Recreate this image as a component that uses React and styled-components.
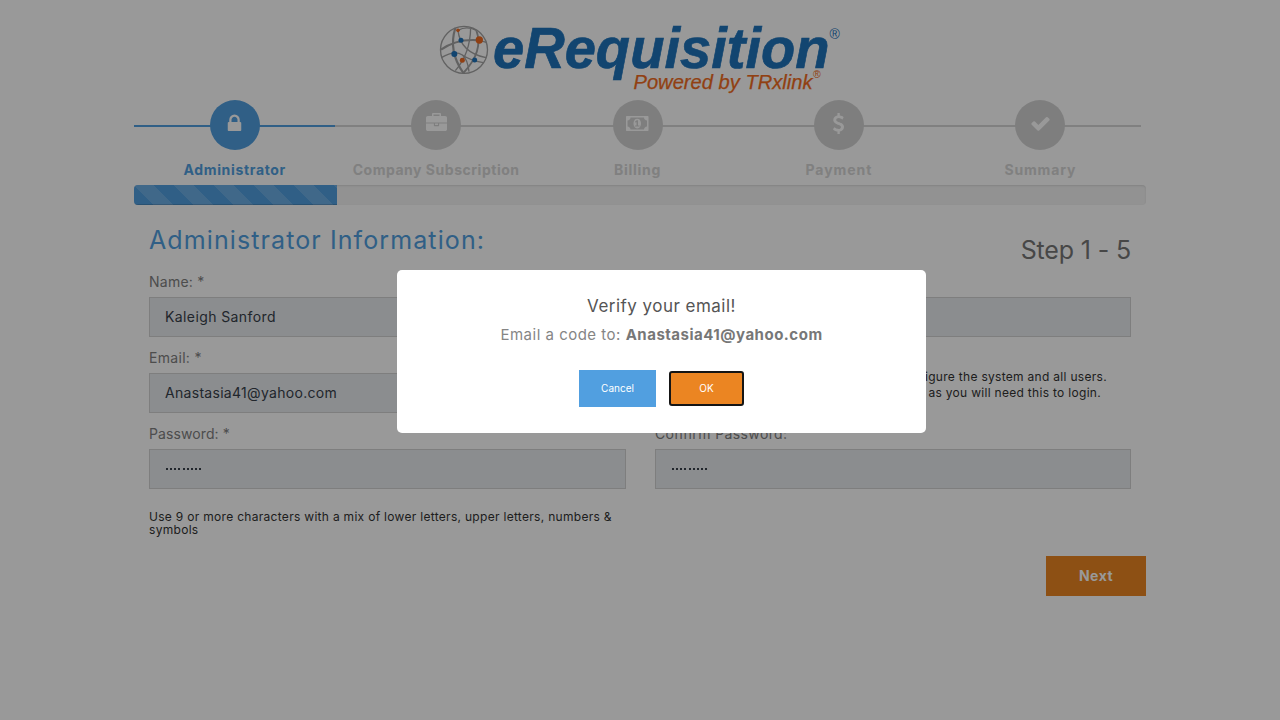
import React from 'react';
import styled, { createGlobalStyle } from 'styled-components';

const GlobalStyle = createGlobalStyle`
  *, *::before, *::after { box-sizing: border-box; }
  body {
    margin: 0;
    background: #fff;
    color: #808080;
    font-family: Inter, "Open Sans", sans-serif;
    font-size: 14px;
    overflow: hidden;
  }
  h1, h2, p { margin: 0; font-weight: 400; }
`;

const Page = styled.main`
  width: 1012px;
  height: 720px;
  margin: 0 auto;
`;

const LogoBar = styled.header`
  display: flex;
  justify-content: center;
  height: 100px;
`;

const Steps = styled.ol`
  display: flex;
  list-style: none;
  width: 1007px;
  height: 85px;
  margin: 0;
  padding: 0;
`;

const StepItem = styled.li`
  flex: 1;
  display: flex;
  flex-direction: column;
  align-items: center;
  color: ${(p) => (p.$active ? '#519fe0' : '#d5d5d5')};
  background: linear-gradient(currentColor, currentColor) 0 25px / 100% 2px no-repeat;
`;

const StepCircle = styled.span`
  display: flex;
  justify-content: center;
  width: 50px;
  height: 50px;
  padding-top: 13px;
  border-radius: 50%;
  background: ${(p) => (p.$active ? '#519fe0' : '#d3d3d3')};
  svg { display: block; height: 21px; fill: #fff; }
`;

const StepLabel = styled.span`
  margin-top: 11px;
  font-weight: 700;
  line-height: 18px;
  white-space: nowrap;
  letter-spacing: ${(p) => p.$track}px;
`;

const Progress = styled.div`
  height: 20px;
  border-radius: 4px;
  overflow: hidden;
  background: #f3f3f3;
  box-shadow: inset 0 1px 2px rgba(0, 0, 0, 0.1);
`;

const ProgressFill = styled.div`
  width: 203px;
  height: 100%;
  background-color: #519fe0;
  background-image: linear-gradient(45deg, rgba(255,255,255,.15) 25%, transparent 25%, transparent 50%, rgba(255,255,255,.15) 50%, rgba(255,255,255,.15) 75%, transparent 75%, transparent);
  background-size: 40px 40px;
  box-shadow: inset 0 -1px 0 rgba(0, 0, 0, 0.15);
`;

const TitleRow = styled.div`
  display: flex;
  justify-content: space-between;
  height: 68px;
  padding: 0 15px;
`;

const Heading = styled.h1`
  margin-top: 20px;
  font-size: 25px;
  line-height: 30px;
  letter-spacing: 1.1px;
  color: #519fe0;
`;

const StepCount = styled.p`
  margin-top: 30px;
  font-size: 25px;
  line-height: 30px;
  letter-spacing: -0.15px;
  color: #777;
`;

const FormGrid = styled.form`
  display: grid;
  grid-template-columns: 477px 476px;
  column-gap: 29px;
  grid-auto-rows: 76px;
  padding: 0 15px;
`;

const Field = styled.div`
  display: flex;
  flex-direction: column;
`;

const Label = styled.label`
  height: 24px;
  line-height: 18px;
  letter-spacing: ${(p) => p.$track ?? 0.1}px;
`;

const Input = styled.input`
  width: 100%;
  height: 40px;
  padding: 0 15px 2px;
  border: 1px solid #d2d2d2;
  border-radius: 0;
  outline: 0;
  background: #e8ebee;
  color: #37404a;
  font: 400 14px Inter, sans-serif;
  letter-spacing: ${(p) => p.$track ?? 0.4}px;
`;

const PasswordBox = styled.div`
  display: flex;
  align-items: center;
  gap: 2px;
  height: 40px;
  padding: 0 15px 0 16px;
  border: 1px solid #d2d2d2;
  background: #e8ebee;
`;

const Dot = styled.i`
  width: 2px;
  height: 2px;
  margin-right: 0.15px;
  background: #37404a;
`;

const Note = styled.div`
  padding-top: 20px;
  text-align: right;
  font-size: 12px;
  line-height: 16px;
  color: #333;
  letter-spacing: 0.3px;
`;

const NoteLine = styled.p`
  padding-right: ${(p) => p.$inset}px;
`;

const Hint = styled.p`
  width: 477px;
  margin: 9px 15px 0;
  font-size: 12px;
  line-height: 13px;
  letter-spacing: 0.3px;
  color: #333;
`;

const Actions = styled.div`
  display: flex;
  justify-content: flex-end;
  margin-top: 20px;
`;

const NextButton = styled.button`
  width: 100px;
  height: 40px;
  padding-bottom: 2px;
  border: 0;
  background: #eb8522;
  color: #fff;
  font: 700 14px Inter, sans-serif;
  letter-spacing: 0.45px;
`;

const Overlay = styled.div`
  position: fixed;
  inset: 0;
  display: flex;
  align-items: flex-start;
  justify-content: center;
  padding: 270px 0 0 43px;
  background: rgba(0, 0, 0, 0.4);
`;

const Dialog = styled.section`
  display: flex;
  flex-direction: column;
  align-items: center;
  width: 529px;
  height: 163.4px;
  padding-top: 24px;
  border-radius: 5px;
  background: #fff;
`;

const DialogTitle = styled.h2`
  font-size: 17px;
  line-height: 24px;
  letter-spacing: 0.47px;
  color: #555;
`;

const DialogText = styled.p`
  margin-top: 5px;
  font-size: 15px;
  line-height: 24px;
  letter-spacing: 0.5px;
  color: #858585;
  strong { color: #777; letter-spacing: 0.5px; }
`;

const DialogButtons = styled.div`
  display: flex;
  gap: 13px;
  margin-top: 23px;
`;

const DialogButton = styled.button`
  width: 77px;
  height: 37px;
  padding: 0 0 2px;
  border: 0;
  background: ${(p) => (p.$primary ? '#eb8522' : '#519fe0')};
  color: #fff;
  font: 400 10px Inter, sans-serif;
`;

const ConfirmButton = styled(DialogButton)`
  width: 75px;
  height: 35px;
  margin-top: 1px;
  border: 2px solid #151515;
  border-radius: 3px;
`;

const Mark = ({ box = '0 0 1792 1792', d }) => (
  <svg viewBox={box} aria-hidden="true"><path d={d} /></svg>
);

const steps = [
  { label: 'Administrator', track: 0.66, active: true, d: 'M640 768h512v-192q0-106-75-181t-181-75-181 75-75 181v192zm832 96v576q0 40-28 68t-68 28h-960q-40 0-68-28t-28-68v-576q0-40 28-68t68-28h32v-192q0-184 132-316t316-132 316 132 132 316v192h32q40 0 68 28t28 68z' },
  { label: 'Company Subscription', track: 0.52, d: 'M640 256h512v-128h-512v128zm1152 640v480q0 66-47 113t-113 47h-1472q-66 0-113-47t-47-113v-480h672v160q0 26 19 45t45 19h320q26 0 45-19t19-45v-160h672zm-768 0v128h-256v-128h256zm768-480v384h-1792v-384q0-66 47-113t113-47h352v-160q0-40 28-68t68-28h576q40 0 68 28t28 68v160h352q66 0 113 47t47 113z' },
  { label: 'Billing', track: 0.7, box: '0 -256 1920 1792', d: 'M768 896h384v-96h-128v-448h-114l-148 137 77 80q42-37 55-57h2v288h-128v96zm512-256q0 70-21 142t-59.500 134-101.500 101-138 39-138-39-101.500-101-59.500-134-21-142 21-142 59.500-134 101.500-101 138-39 138 39 101.500 101 59.500 134 21 142zm512 256v-512q-106 0-181-75t-75-181h-1152q0 106-75 181t-181 75v512q106 0 181 75t75 181h1152q0-106 75-181t181-75zm128-832v1152q0 26-19 45t-45 19h-1792q-26 0-45-19t-19-45v-1152q0-26 19-45t45-19h1792q26 0 45 19t19 45z' },
  { label: 'Payment', track: 0.95, d: 'M1362 1185q0 153-99.500 263.500t-258.500 136.500v175q0 14-9 23t-23 9h-135q-13 0-22.500-9.500t-9.500-22.500v-175q-66-9-127.500-31t-101.500-44.500-74-48-46.500-37.500-17.500-18q-17-21-2-41l103-135q7-10 23-12 15-2 24 9l2 2q113 99 243 125 37 8 74 8 81 0 142.500-43t61.500-122q0-28-15-53t-33.500-42-58.500-37.500-66-32-80-32.500q-39-16-61.500-25t-61.500-26.500-62.500-31-56.500-35.500-53.500-42.500-43.500-49-35.500-58-21-66.500-8.500-78q0-138 98-242t255-134v-180q0-13 9.500-22.500t22.500-9.500h135q14 0 23 9t9 23v176q57 6 110.500 23t87 33.500 63.500 37.500 39 29 15 14q17 18 5 38l-81 146q-8 15-23 16-14 3-27-7-3-3-14.500-12t-39-26.500-58.500-32-74.500-26-85.500-11.500q-95 0-155 43t-60 111q0 26 8.500 48t29.500 41.500 39.500 33 56 31 60.500 27 70 27.500q53 20 81 31.500t76 35 75.500 42.500 62 50 53 63.500 31.500 76.500 13 94z' },
  { label: 'Summary', track: 0.85, d: 'M1671 566q0 40-28 68l-724 724-136 136q-28 28-68 28t-68-28l-136-136-362-362q-28-28-28-68t28-68l136-136q28-28 68-28t68 28l294 295 656-657q28-28 68-28t68 28l136 136q28 28 28 68z' },
];

const Logo = () => (
  <svg width="404" height="100" viewBox="438 0 404 100" role="img" aria-label="eRequisition, Powered by TRxlink">
    <g transform="translate(430 15) scale(.33333)" fill="none" stroke="#a3a3a3">
      <circle cx="102" cy="104.500" r="70.500" strokeWidth="4" />
      <path d="M76 39Q54 108 100 174M33 104Q82 70 148 76" strokeWidth="6.500" />
      <path d="M139 46Q162 108 100 174" strokeWidth="5.500" />
      <path d="M148 76L169 82M84 46Q91 112 168 128M122 37Q121 116 76 167M34 128Q74 104 97 120T160 143M97 120Q113 133 117 170M84 46Q110 31 139 46" strokeWidth="4" />
      <g fill="#1e73bb" stroke="none">
        <circle cx="93" cy="76" r="7.500" /><circle cx="73" cy="117" r="9" /><circle cx="134" cy="135" r="7.500" />
      </g>
      <g fill="#f26b21" stroke="none">
        <circle cx="84" cy="46" r="5.500" /><circle cx="148" cy="75" r="11" /><circle cx="97" cy="136" r="7.500" />
      </g>
    </g>
    <g fill="#1e73bb" fontFamily="Liberation Sans, Arial, sans-serif">
      <text x="493" y="68" fontSize="58" fontWeight="700" fontStyle="italic" textLength="336.500" lengthAdjust="spacingAndGlyphs" stroke="#1e73bb" strokeWidth=".7">eRequisition</text>
      <text x="829.500" y="39" fontSize="14">®</text>
    </g>
    <g fill="#f26b21" fontFamily="Liberation Sans, Arial, sans-serif">
      <text x="633.500" y="89" fontSize="20" fontStyle="italic" textLength="179" lengthAdjust="spacingAndGlyphs" stroke="#f26b21" strokeWidth=".25">Powered by TRxlink</text>
      <text x="813" y="78" fontSize="10.500">®</text>
    </g>
  </svg>
);

const Password = () => (
  <PasswordBox>{Array.from({ length: 9 }, (_, i) => <Dot key={i} />)}</PasswordBox>
);

export default function App() {
  return (
    <>
      <GlobalStyle />
      <Page>
        <LogoBar><Logo /></LogoBar>
        <Steps>
          {steps.map((s) => (
            <StepItem key={s.label} $active={s.active}>
              <StepCircle $active={s.active}><Mark box={s.box} d={s.d} /></StepCircle>
              <StepLabel $track={s.track}>{s.label}</StepLabel>
            </StepItem>
          ))}
        </Steps>
        <Progress><ProgressFill /></Progress>
        <TitleRow>
          <Heading>Administrator Information:</Heading>
          <StepCount>Step 1 - 5</StepCount>
        </TitleRow>
        <FormGrid>
          <Field>
            <Label $track={0.25}>Name: *</Label>
            <Input defaultValue="Kaleigh Sanford" />
          </Field>
          <Field>
            <Label>&nbsp;</Label>
            <Input />
          </Field>
          <Field>
            <Label $track={0.3}>Email: *</Label>
            <Input $track={0.3} defaultValue="Anastasia41@yahoo.com" />
          </Field>
          <Note>
            <NoteLine $inset={24}>configure the system and all users.</NoteLine>
            <NoteLine $inset={30}>as you will need this to login.</NoteLine>
          </Note>
          <Field>
            <Label>Password: *</Label>
            <Password />
          </Field>
          <Field>
            <Label $track={0.38}>Confirm Password:</Label>
            <Password />
          </Field>
        </FormGrid>
        <Hint>Use 9 or more characters with a mix of lower letters, upper letters, numbers &amp; symbols</Hint>
        <Actions><NextButton>Next</NextButton></Actions>
      </Page>
      <Overlay>
        <Dialog role="dialog">
          <DialogTitle>Verify your email!</DialogTitle>
          <DialogText>Email a code to: <strong>Anastasia41@yahoo.com</strong></DialogText>
          <DialogButtons>
            <DialogButton>Cancel</DialogButton>
            <ConfirmButton $primary>OK</ConfirmButton>
          </DialogButtons>
        </Dialog>
      </Overlay>
    </>
  );
}
